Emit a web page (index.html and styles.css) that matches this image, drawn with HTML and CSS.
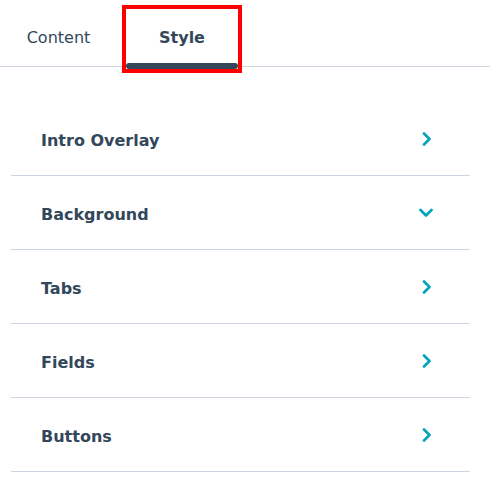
FILE: index.html
```html
<!DOCTYPE html>
<html>
<head>
  <title>Style</title>
  <link rel="stylesheet" href="styles.css">
</head>
<body>
  <div class="tabs">
    <div class="tab">Content</div>
    <div class="tab active highlighted">Style</div>
  </div>

  <div class="sections">
    <div class="row">
      <span class="label">Intro Overlay</span>
      <svg class="chev" viewBox="0 0 14 14"><polyline points="5,1.5 10.5,7 5,12.5"/></svg>
    </div>
    <div class="row">
      <span class="label">Background</span>
      <svg class="chev" viewBox="0 0 14 14"><polyline points="1.5,4 7,9.5 12.5,4"/></svg>
    </div>
    <div class="row">
      <span class="label">Tabs</span>
      <svg class="chev" viewBox="0 0 14 14"><polyline points="5,1.5 10.5,7 5,12.5"/></svg>
    </div>
    <div class="row">
      <span class="label">Fields</span>
      <svg class="chev" viewBox="0 0 14 14"><polyline points="5,1.5 10.5,7 5,12.5"/></svg>
    </div>
    <div class="row">
      <span class="label">Buttons</span>
      <svg class="chev" viewBox="0 0 14 14"><polyline points="5,1.5 10.5,7 5,12.5"/></svg>
    </div>
  </div>
</body>
</html>
```

FILE: styles.css
```css
body {
  margin: 0;
  font-family: "DejaVu Sans", "Noto Sans", sans-serif;
  color: #33475b;
  background: #fff;
}

.tabs {
  display: flex;
  align-items: flex-start;
  height: 66px;
  border-bottom: 1px solid #cbd6e2;
}

.tab {
  box-sizing: border-box;
  height: 60px;
  margin-top: 9px;
  padding-top: 17px;
  line-height: 24px;
  font-size: 16px;
  text-align: center;
  position: relative;
}

.tab:first-child {
  width: 117px;
  margin-right: 9px;
}

.tab.active {
  width: 112px;
  font-weight: 700;
}

.tab.active::after {
  content: "";
  position: absolute;
  left: 0;
  right: 0;
  bottom: 0;
  height: 6px;
  border-radius: 3px;
  background: #33475b;
}

.highlighted {
  outline: 4px solid #ff0000;
}

.sections {
  margin: 35px 20px 0 11px;
}

.row {
  box-sizing: border-box;
  height: 74px;
  display: flex;
  align-items: center;
  justify-content: space-between;
  padding: 0 37px 0 30px;
  border-bottom: 1px solid #cbd6e2;
}

.label {
  font-size: 16px;
  font-weight: 700;
  padding-top: 3px;
}

.chev {
  width: 14px;
  height: 14px;
  fill: none;
  stroke: #00a4bd;
  stroke-width: 2.6;
  stroke-linecap: round;
  stroke-linejoin: round;
}
```
